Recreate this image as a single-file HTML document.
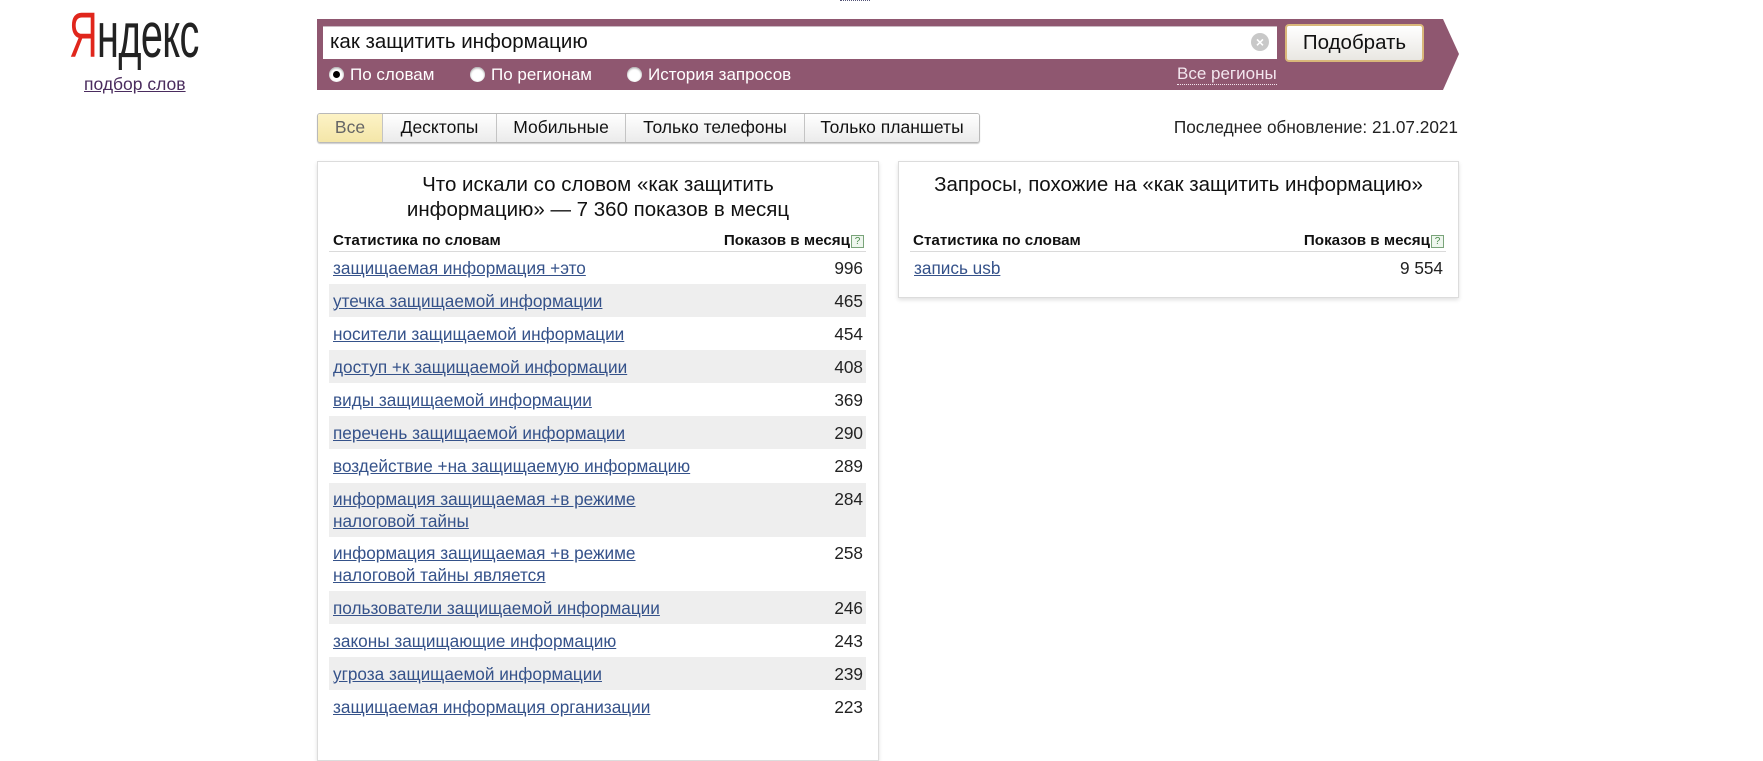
<!DOCTYPE html>
<html><head><meta charset="utf-8">
<style>
*{margin:0;padding:0;box-sizing:border-box}
body{width:1763px;height:723px;background:#fff;position:relative;overflow:hidden;font-family:"Liberation Sans",Arial,sans-serif;color:#222}
.a{position:absolute;white-space:nowrap}
.logo{left:69px;top:3px;font-size:64px;line-height:64px;transform:scaleX(0.62);transform-origin:0 0;letter-spacing:-1px}
.logo .r{color:#e0261c}
.sub{left:84px;top:74px;font-size:17.5px;color:#4a2c5e;text-decoration:underline}
.bar{left:317px;top:19px;width:1142px;height:71px}
.inp{left:323px;top:26px;width:954px;height:33px;background:#fff;border-top:1px solid #c9b8c1}
.q{left:330px;top:28px;font-size:20.5px;line-height:28px;color:#111}
.clr{left:1251px;top:33px;width:18px;height:18px;border-radius:50%;background:#c8c8c8;color:#fff;font-size:14px;line-height:18px;text-align:center;font-weight:bold}
.btn{left:1285px;top:24px;width:139px;height:38px;border:2px solid #d9b77a;border-radius:4px;background:linear-gradient(#fff,#e9e7e2);font-size:20.5px;line-height:33px;text-align:center;color:#111}
.rad{top:65px;font-size:17px;line-height:20px;color:#fff}
.dot{display:inline-block;width:15px;height:15px;border-radius:50%;background:#fff;vertical-align:-2px;margin-right:6px;position:relative;box-shadow:inset 0 1px 2px #999}
.dot.on::after{content:"";position:absolute;left:4px;top:4px;width:7px;height:7px;border-radius:50%;background:#000}
.reg{left:1177px;top:64px;font-size:17px;line-height:20px;color:#f3e6ee;border-bottom:1px dotted #f3e6ee}
.tabs{left:317px;top:113px;height:30px;display:flex;border:1px solid #b9b9b9;border-radius:3px;overflow:hidden;box-shadow:0 1px 1px #ccc}
.tabs div{height:28px;line-height:27px;font-size:17.5px;text-align:center;background:linear-gradient(#fff,#ebebeb);border-left:1px solid #c4c4c4;color:#111}
.tabs div:first-child{border-left:none;background:linear-gradient(#fdf3c6,#f4e6a8);color:#666}
.upd{right:305px;top:116px;font-size:17.2px;line-height:22px;color:#222}
.panel{position:absolute;border:1px solid #dcdcdc;box-shadow:0 2px 4px rgba(0,0,0,.12);background:#fff}
.tt{font-size:20.5px;line-height:25px;text-align:center;color:#111}
.hd{font-size:15.2px;font-weight:bold;line-height:18px;color:#111}
.qm{display:inline-block;width:13px;height:13px;border:1px solid #7aa47a;color:#4b8a4b;font-size:10px;line-height:11px;text-align:center;font-weight:normal;vertical-align:1px;margin-left:1px;background:#eef6ee}
.ln{height:1px;background:#dadada}
.row{position:absolute;left:329px;width:537px;font-size:17.2px;line-height:34px}
.row.g{background:#eeeeee}
.row a{position:absolute;left:4px;color:#35528a;text-decoration:underline}
.row b{position:absolute;right:3px;font-weight:normal;color:#222}
.row.d{line-height:22px}
.row.d a{top:5px}
.row.d b{top:5px}
</style></head><body>
<div class="a" style="left:840px;top:0;width:30px;border-top:1px dotted #557"></div>
<div class="a logo"><span class="r">Я</span>ндекс</div>
<div class="a sub">подбор слов</div>

<svg class="a bar" width="1142" height="71" viewBox="0 0 1142 71"><polygon points="0,0 1126,0 1142,35 1126,71 0,71" fill="#8f5770"/></svg>
<div class="a inp"></div>
<div class="a q">как защитить информацию</div>
<div class="a clr">×</div>
<div class="a btn">Подобрать</div>
<div class="a rad" style="left:329px"><span class="dot on"></span>По словам</div>
<div class="a rad" style="left:470px"><span class="dot"></span>По регионам</div>
<div class="a rad" style="left:627px"><span class="dot"></span>История запросов</div>
<div class="a reg">Все регионы</div>

<div class="a tabs">
<div style="width:64px">Все</div>
<div style="width:114px">Десктопы</div>
<div style="width:129px">Мобильные</div>
<div style="width:179px">Только телефоны</div>
<div style="width:175px">Только планшеты</div>
</div>
<div class="a upd">Последнее обновление: 21.07.2021</div>

<div class="panel" style="left:317px;top:161px;width:562px;height:600px"></div>
<div class="a tt" style="left:317px;top:172px;width:562px">Что искали со словом «как защитить<br>информацию» — 7 360 показов в месяц</div>
<div class="a hd" style="left:333px;top:232px">Статистика по словам</div>
<div class="a hd" style="right:899px;top:232px">Показов в месяц<span class="qm">?</span></div>
<div class="a ln" style="left:329px;top:251px;width:537px"></div>

<div class="row" style="top:251px;height:33px"><a>защищаемая информация +это</a><b>996</b></div>
<div class="row g" style="top:284px;height:33px"><a>утечка защищаемой информации</a><b>465</b></div>
<div class="row" style="top:317px;height:33px"><a>носители защищаемой информации</a><b>454</b></div>
<div class="row g" style="top:350px;height:33px"><a>доступ +к защищаемой информации</a><b>408</b></div>
<div class="row" style="top:383px;height:33px"><a>виды защищаемой информации</a><b>369</b></div>
<div class="row g" style="top:416px;height:33px"><a>перечень защищаемой информации</a><b>290</b></div>
<div class="row" style="top:449px;height:34px"><a>воздействие +на защищаемую информацию</a><b>289</b></div>
<div class="row g d" style="top:483px;height:54px"><a>информация защищаемая +в режиме<br>налоговой тайны</a><b>284</b></div>
<div class="row d" style="top:537px;height:54px"><a>информация защищаемая +в режиме<br>налоговой тайны является</a><b>258</b></div>
<div class="row g" style="top:591px;height:33px"><a>пользователи защищаемой информации</a><b>246</b></div>
<div class="row" style="top:624px;height:33px"><a>законы защищающие информацию</a><b>243</b></div>
<div class="row g" style="top:657px;height:33px"><a>угроза защищаемой информации</a><b>239</b></div>
<div class="row" style="top:690px;height:33px"><a>защищаемая информация организации</a><b>223</b></div>

<div class="panel" style="left:898px;top:161px;width:561px;height:137px"></div>
<div class="a tt" style="left:898px;top:172px;width:561px">Запросы, похожие на «как защитить информацию»</div>
<div class="a hd" style="left:913px;top:232px">Статистика по словам</div>
<div class="a hd" style="right:319px;top:232px">Показов в месяц<span class="qm">?</span></div>
<div class="a ln" style="left:910px;top:251px;width:536px"></div>
<div class="row" style="left:910px;width:536px;top:251px;height:33px"><a>запись usb</a><b>9 554</b></div>
</body></html>
